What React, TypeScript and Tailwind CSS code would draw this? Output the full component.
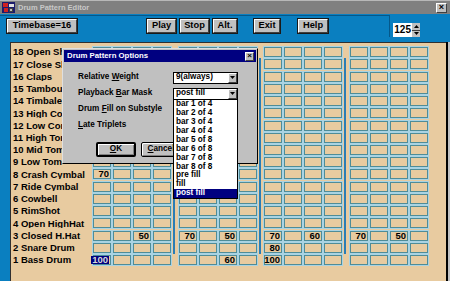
import React from 'react';

const labels = [
  '18 Open Shaker', '17 Close Shaker', '16 Claps', '15 Tambourine', '14 Timbale',
  '13 High Conga', '12 Low Conga', '11 High Tom', '10 Mid Tom', '9 Low Tom',
  '8 Crash Cymbal', '7 Ride Cymbal', '6 Cowbell', '5 RimShot', '4 Open HighHat',
  '3 Closed H.Hat', '2 Snare Drum', '1 Bass Drum',
];

// row number -> column (1..16) -> value
const values: Record<string, string> = {
  '8-1': '70',
  '3-3': '50', '3-5': '70', '3-7': '50', '3-9': '70', '3-11': '60', '3-13': '70', '3-15': '50',
  '2-9': '80',
  '1-1': '100', '1-7': '60', '1-9': '100',
};

const barItems = [
  'bar 1 of 4', 'bar 2 of 4', 'bar 3 of 4', 'bar 4 of 4', 'bar 5 of 8', 'bar 6 of 8',
  'bar 7 of 8', 'bar 8 of 8', 'pre fill', 'fill', 'post fill',
];

function ToolButton({ label, className = '' }: { label: string; className?: string }) {
  return (
    <div
      className={`flex h-[14px] items-center justify-center border border-t-white border-l-white border-r-[#404040] border-b-[#404040] bg-[#c0c0c0] text-[9.3px] font-bold leading-none text-black outline outline-1 outline-[#1a1a1a] ${className}`}
    >
      {label}
    </div>
  );
}

function Arrow() {
  return (
    <div className="flex h-full w-[9px] items-center justify-center border border-t-white border-l-white border-r-[#404040] border-b-[#404040] bg-[#c0c0c0]">
      <svg width="5" height="3" viewBox="0 0 5 3">
        <path d="M0 0h5L2.5 3z" fill="#000" />
      </svg>
    </div>
  );
}

function Cell({ row, col }: { row: number; col: number }) {
  const v = values[`${row}-${col}`];
  const selected = row === 1 && col === 1;
  return (
    <div className="h-[10px] w-[18px] border border-[#4f8c98] bg-[#e8cba0] ring-1 ring-[#a9d3e3]">
      {v && (
        <div className="flex h-full items-center justify-end pr-[1px]">
          <span
            className={`text-[9.5px] font-bold leading-[8px] ${selected ? 'bg-[#000080] px-[1px] text-[#d8d8d8]' : 'text-black'}`}
          >
            {v}
          </span>
        </div>
      )}
    </div>
  );
}

function PatternRow({ label, row }: { label: string; row: number }) {
  const showLine = row >= 2 && row <= 17;
  return (
    <div className="flex h-[12.24px] items-center">
      <div className="w-[82px] overflow-hidden whitespace-nowrap pl-[2px] text-[9.5px] font-bold leading-none text-black">
        {label}
      </div>
      {[0, 1, 2, 3].map((g) => (
        <React.Fragment key={g}>
          {g > 0 && (
            <div className={`flex h-full ${g === 2 ? 'w-[7px]' : 'w-[8px]'} pl-[2px]`}>
              {showLine && <div className="h-full w-[2px] bg-[#2a7db5]" />}
            </div>
          )}
          <div className="flex gap-[2px]">
            {[1, 2, 3, 4].map((c) => (
              <Cell key={c} row={row} col={g * 4 + c} />
            ))}
          </div>
        </React.Fragment>
      ))}
    </div>
  );
}

function OptionsDialog() {
  return (
    <div className="absolute left-[62px] top-[48px] flex h-[116px] w-[196px] flex-col border border-t-[#dfdfdf] border-l-[#dfdfdf] border-r-black border-b-black bg-[#c0c0c0] p-[1px]">
      <div className="flex h-[12px] items-center justify-between bg-[#000080] pl-[3px] pr-[2px]">
        <span className="text-[7.8px] font-bold leading-none text-white">Drum Pattern Options</span>
        <div className="flex h-[9px] w-[9px] items-center justify-center border border-t-white border-l-white border-r-[#404040] border-b-[#404040] bg-[#c0c0c0] text-[8px] font-bold leading-none text-black">
          ×
        </div>
      </div>

      <div className="mt-[7.5px] flex flex-col pl-[14px] text-[8.2px] font-bold leading-none text-black">
        <div className="flex h-[16px] items-center">
          <span className="w-[95px]">
            Relative <span className="underline">W</span>eight
          </span>
          <div className="flex h-[12px] w-[65px] items-center border border-black bg-white">
            <span className="flex-1 pl-[2px]">9(always)</span>
            <Arrow />
          </div>
        </div>
        <div className="flex h-[16px] items-center">
          <span className="w-[95px]">
            Playback <span className="underline">B</span>ar Mask
          </span>
          <div className="relative flex h-[12px] w-[65px] items-center border border-black bg-white">
            <span className="flex-1 pl-[2px]">post fill</span>
            <Arrow />
            <div className="absolute left-[-1px] top-[10px] z-10 flex w-[65px] flex-col border border-black bg-white py-[0.5px]">
              {barItems.map((item) => (
                <div
                  key={item}
                  className={`flex h-[8.9px] items-center pl-[2px] ${item === 'post fill' ? 'bg-[#000080] text-white' : 'text-black'}`}
                >
                  {item}
                </div>
              ))}
            </div>
          </div>
        </div>
        <div className="flex h-[16px] items-center">
          <span>
            Drum <span className="underline">F</span>ill on Substyle
          </span>
        </div>
        <div className="flex h-[16px] items-center">
          <span>
            <span className="underline">L</span>ate Triplets
          </span>
        </div>
      </div>

      <div className="mt-[8.5px] flex gap-[5px] pl-[32px]">
        <div className="flex h-[15px] w-[40px] items-center justify-center rounded-[2px] border-2 border-black bg-[#c0c0c0] text-[8.2px] font-bold leading-none text-black shadow-[inset_1px_1px_0_#fff,inset_-1px_-1px_0_#808080]">
          <span>
            <span className="underline">O</span>K
          </span>
        </div>
        <div className="flex h-[15px] w-[40px] items-center justify-center rounded-[2px] border border-black bg-[#c0c0c0] text-[8.2px] font-bold leading-none text-black shadow-[inset_1px_1px_0_#fff,inset_-1px_-1px_0_#808080]">
          <span>
            <span className="underline">C</span>ancel
          </span>
        </div>
      </div>
    </div>
  );
}

export default function App() {
  return (
    <div className="relative flex h-[281px] w-[450px] flex-col overflow-hidden bg-[#c0c0c0] font-['Liberation_Sans',Arial,sans-serif]">
      {/* title bar */}
      <div className="flex h-[14px] items-center border-t border-[#b8b8b8] bg-[#808080] pl-[2px] pr-[3px]">
        <svg width="13" height="11" viewBox="0 0 13 11" className="shrink-0">
          <rect width="13" height="11" fill="#1c1c6c" />
          <rect x="1" y="1" width="5" height="4" fill="#d02020" />
          <rect x="7" y="2" width="5" height="3" fill="#e0e0e0" />
          <rect x="2" y="6" width="4" height="4" fill="#d02020" />
          <rect x="7" y="6" width="4" height="4" fill="#404040" />
          <rect x="8" y="7" width="2" height="2" fill="#c0c0c0" />
        </svg>
        <span className="ml-[3px] text-[7.5px] font-bold leading-none text-[#c8c8c8]">Drum Pattern Editor</span>
        <div className="ml-auto flex h-[10px] w-[11px] items-center justify-center border border-t-white border-l-white border-r-[#404040] border-b-[#404040] bg-[#c0c0c0] text-[9px] font-bold leading-none text-black">
          ×
        </div>
      </div>

      {/* toolbar */}
      <div className="flex h-[28px] bg-[#0a7fc0]">
        <div className="mt-[1px] flex h-[22px] w-[390px] items-start border-t border-r border-[#05588a] pt-[3px]">
          <ToolButton label="Timebase=16" className="ml-[7px] w-[70px]" />
          <ToolButton label="Play" className="ml-[70px] w-[29px]" />
          <ToolButton label="Stop" className="ml-[4px] w-[29px]" />
          <ToolButton label="Alt." className="ml-[4px] w-[24px]" />
          <ToolButton label="Exit" className="ml-[17px] w-[26px]" />
          <ToolButton label="Help" className="ml-[18px] w-[30px]" />
        </div>
        <div className="ml-[3px] mt-[9px] flex h-[14px]">
          <div className="flex w-[19px] items-center justify-end bg-white pr-[1px] text-[10px] font-bold leading-none text-black">
            125
          </div>
          <div className="flex w-[8px] flex-col bg-[#c0c0c0]">
            <div className="flex flex-1 items-center justify-center border-b border-[#404040]">
              <svg width="5" height="3" viewBox="0 0 5 3">
                <path d="M2.5 0L5 3H0z" fill="#000" />
              </svg>
            </div>
            <div className="flex flex-1 items-center justify-center">
              <svg width="5" height="3" viewBox="0 0 5 3">
                <path d="M0 0h5L2.5 3z" fill="#000" />
              </svg>
            </div>
          </div>
        </div>
      </div>

      {/* body */}
      <div className="flex flex-1">
        <div className="w-[10px] bg-[#0a7fc0]" />
        <div className="flex-1 border-t border-l border-[#303030] bg-[#e8cba0] pt-[3px]">
          {labels.map((l, i) => (
            <PatternRow key={l} label={l} row={18 - i} />
          ))}
        </div>
        <div className="w-[2px] bg-black" />
        <div className="w-[2px] bg-[#c0c0c0]" />
      </div>

      <OptionsDialog />
    </div>
  );
}
